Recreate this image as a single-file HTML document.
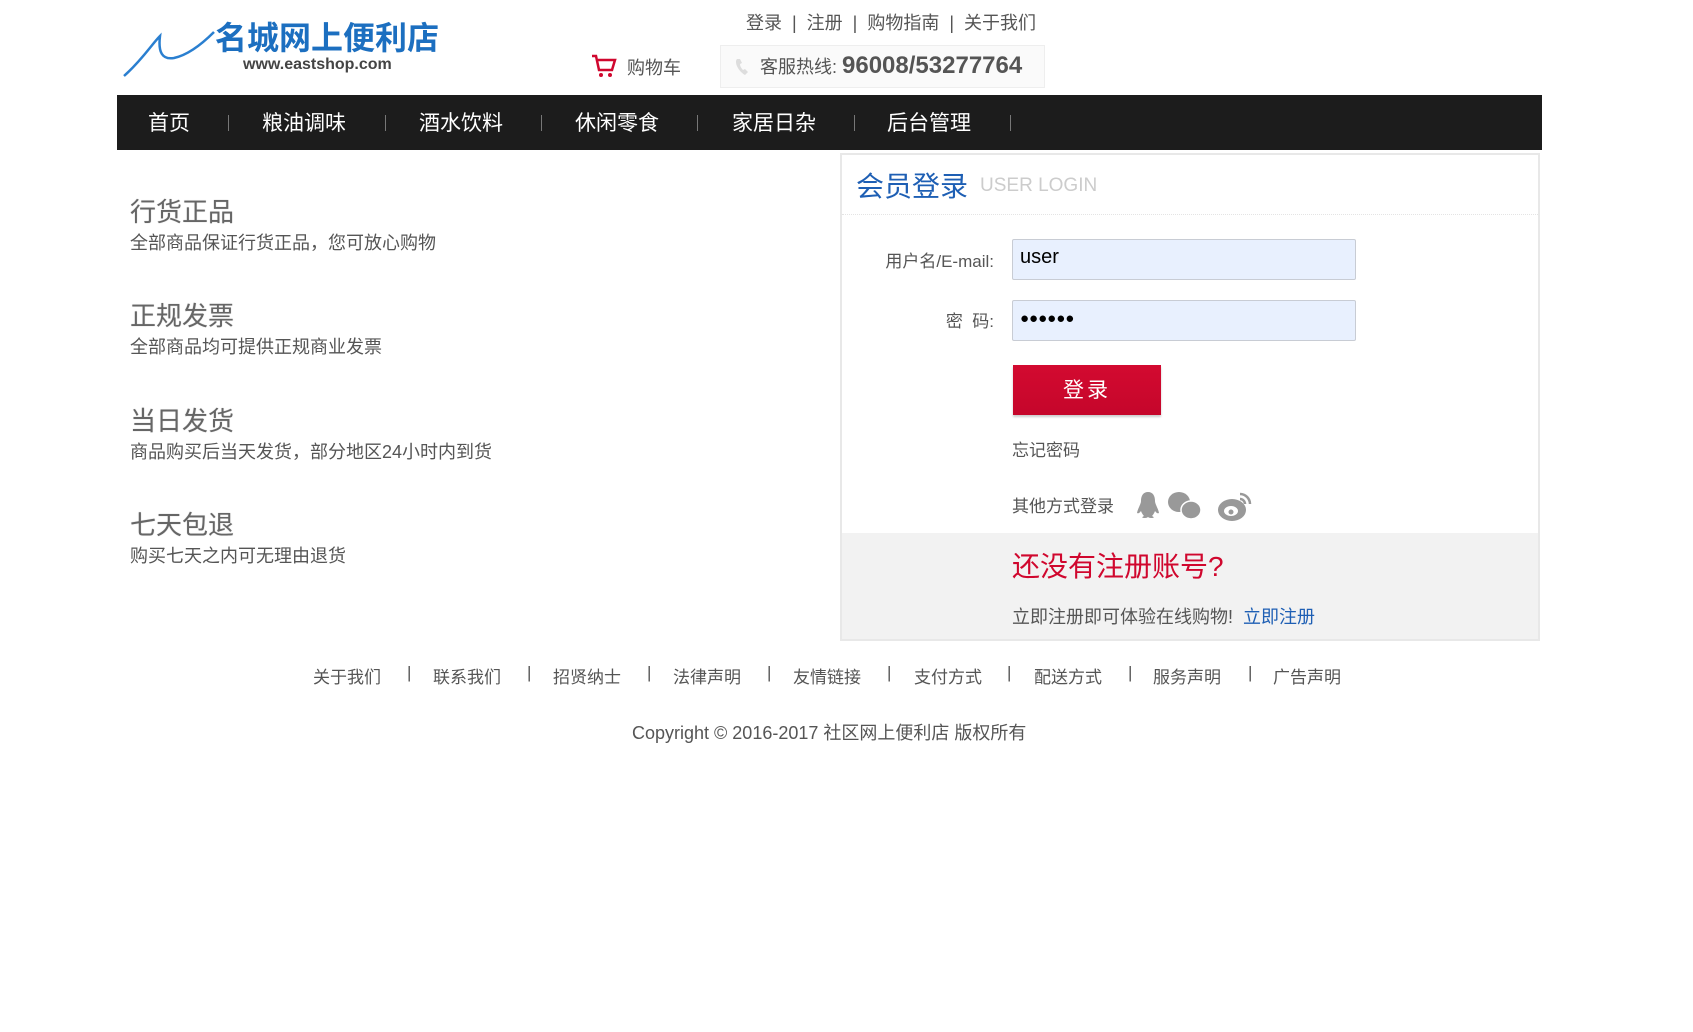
<!DOCTYPE html>
<html><head><meta charset="utf-8">
<style>
*{margin:0;padding:0;box-sizing:border-box}
body{width:1693px;height:1032px;background:#fff;font-family:"Liberation Sans","Noto Sans CJK SC",sans-serif;color:#555;position:relative;overflow:hidden}
.a{position:absolute;white-space:nowrap}
.nav{left:117px;top:95px;width:1425px;height:55px;background:#1c1c1c}
.nav span{position:absolute;top:12px;color:#fff;font-size:21px}
.nav i{position:absolute;top:20px;width:1px;height:16px;background:#777}
.feat h3{font-size:26px;font-weight:normal;color:#666;text-shadow:0 0 1px #bbb}
.feat p{font-size:18px;color:#555;margin-top:0px}
.inp{position:absolute;left:1012px;width:344px;height:41px;background:#e8f0fe;border:1px solid #c8ccd4;border-radius:2px;font-size:20px;color:#000;padding:6px 7px}
.foot{font-size:17px;color:#555;top:663px}
</style></head><body>
<!-- logo -->
<svg class="a" style="left:122px;top:22px" width="100" height="56" viewBox="0 0 100 56"><path d="M2 54 C20 38 30 22 38 14 C36 30 40 38 52 36 C66 33 80 22 92 10" fill="none" stroke="#2a7fd0" stroke-width="2.5"/></svg>
<div class="a" style="left:215px;top:13px;font-size:32px;font-weight:bold;color:#1c6fc0">名城网上便利店</div>
<div class="a" style="left:243px;top:56px;font-size:16px;font-weight:bold;color:#444">www.eastshop.com</div>
<div class="a" style="left:746px;top:9px;font-size:18px;color:#555">登录 &nbsp;|&nbsp; 注册 &nbsp;|&nbsp; 购物指南 &nbsp;|&nbsp; 关于我们</div>
<svg class="a" style="left:591px;top:54px" width="26" height="24" viewBox="0 0 26 24"><path d="M1 2h4l3 14h13l3-10H7" fill="none" stroke="#d0072e" stroke-width="2.5"/><circle cx="10" cy="21" r="2" fill="#d0072e"/><circle cx="19" cy="21" r="2" fill="#d0072e"/></svg>
<div class="a" style="left:627px;top:54px;font-size:18px;color:#555">购物车</div>
<div class="a" style="left:720px;top:45px;width:325px;height:43px;background:#fafafa;border:1px solid #eee"></div>
<svg class="a" style="left:734px;top:58px" width="16" height="18" viewBox="0 0 16 18"><path d="M3 1c-3 3 1 12 8 16l3-3-3-3-2 1C7 10 6 8 6 6l2-1-2-4z" fill="#ddd"/></svg>
<div class="a" style="left:760px;top:52px;font-size:18px;color:#555;line-height:28px">客服热线: <b style="font-size:24px;color:#555">96008/53277764</b></div>
<!-- nav -->
<div class="a nav">
<span style="left:31px">首页</span><i style="left:111px"></i>
<span style="left:145px">粮油调味</span><i style="left:268px"></i>
<span style="left:302px">酒水饮料</span><i style="left:424px"></i>
<span style="left:458px">休闲零食</span><i style="left:580px"></i>
<span style="left:615px">家居日杂</span><i style="left:737px"></i>
<span style="left:770px">后台管理</span><i style="left:893px"></i>
</div>
<!-- features -->
<div class="a feat" style="left:130px;top:192px"><h3>行货正品</h3><p>全部商品保证行货正品，您可放心购物</p></div>
<div class="a feat" style="left:130px;top:296px"><h3>正规发票</h3><p>全部商品均可提供正规商业发票</p></div>
<div class="a feat" style="left:130px;top:401px"><h3>当日发货</h3><p>商品购买后当天发货，部分地区24小时内到货</p></div>
<div class="a feat" style="left:130px;top:505px"><h3>七天包退</h3><p>购买七天之内可无理由退货</p></div>
<!-- login box -->
<div class="a" style="left:840px;top:153px;width:700px;height:488px;border:2px solid #e8e8e8;background:#fff"></div>
<div class="a" style="left:842px;top:214px;width:696px;height:1px;border-top:1px dotted #e4e4e4"></div>
<div class="a" style="left:856px;top:165px;font-size:28px;color:#1e5fb4">会员登录</div>
<div class="a" style="left:980px;top:175px;font-size:19px;color:#ccc">USER LOGIN</div>
<div class="a" style="left:870px;top:247px;width:124px;text-align:right;font-size:17px;color:#555">用户名/E-mail:</div>
<div class="inp" style="top:239px">user</div>
<div class="a" style="left:870px;top:307px;width:124px;text-align:right;font-size:17px;color:#555">密 &nbsp;码:</div>
<div class="inp" style="top:300px;font-size:15px;padding-top:9px">●●●●●●</div>
<div class="a" style="left:1013px;top:365px;width:148px;height:50px;background:linear-gradient(#d30a30,#c5062b);box-shadow:0 2px 2px #ccc;color:#fff;font-size:21px;text-align:center;line-height:52px;letter-spacing:3px">登录</div>
<div class="a" style="left:1012px;top:436px;font-size:17px;color:#555">忘记密码</div>
<div class="a" style="left:1012px;top:492px;font-size:17px;color:#555">其他方式登录</div>
<svg class="a" style="left:1136px;top:488px" width="120" height="36" viewBox="0 0 120 36">
<path d="M12 4c-5 0-7 4-7 9 0 3-3 7-4 12 2 1 3-1 4-2 1 3 3 5 3 5-2 1-3 2 1 2 2 0 3-1 3-1s1 1 3 1c4 0 3-1 1-2 0 0 2-2 3-5 1 1 2 3 4 2-1-5-4-9-4-12 0-5-2-9-7-9z" fill="#999"/>
<ellipse cx="43" cy="14" rx="11" ry="10" fill="#999"/><ellipse cx="55" cy="22" rx="10" ry="9" fill="#999" stroke="#fff" stroke-width="1.5"/>
<ellipse cx="96" cy="22" rx="14" ry="11" fill="#999"/><ellipse cx="95" cy="23" rx="7" ry="5" fill="#fff"/><circle cx="95" cy="24" r="2.5" fill="#999"/>
<path d="M104 6a10 10 0 0 1 10 10M104 11a5 5 0 0 1 5 5" fill="none" stroke="#999" stroke-width="2.5"/>
</svg>
<div class="a" style="left:842px;top:533px;width:696px;height:106px;background:#f2f2f2"></div>
<div class="a" style="left:1012px;top:545px;font-size:28px;color:#d0072e">还没有注册账号?</div>
<div class="a" style="left:1012px;top:603px;font-size:18px;color:#555">立即注册即可体验在线购物! &nbsp;<span style="color:#1e5fb4">立即注册</span></div>
<!-- footer -->
<div class="a foot" style="left:313px">关于我们</div><div class="a foot" style="left:407px">|</div>
<div class="a foot" style="left:433px">联系我们</div><div class="a foot" style="left:527px">|</div>
<div class="a foot" style="left:553px">招贤纳士</div><div class="a foot" style="left:647px">|</div>
<div class="a foot" style="left:673px">法律声明</div><div class="a foot" style="left:767px">|</div>
<div class="a foot" style="left:793px">友情链接</div><div class="a foot" style="left:887px">|</div>
<div class="a foot" style="left:914px">支付方式</div><div class="a foot" style="left:1007px">|</div>
<div class="a foot" style="left:1034px">配送方式</div><div class="a foot" style="left:1128px">|</div>
<div class="a foot" style="left:1153px">服务声明</div><div class="a foot" style="left:1248px">|</div>
<div class="a foot" style="left:1273px">广告声明</div>
<div class="a" style="left:632px;top:719px;font-size:18px;color:#555">Copyright © 2016-2017 社区网上便利店 版权所有</div>
</body></html>
